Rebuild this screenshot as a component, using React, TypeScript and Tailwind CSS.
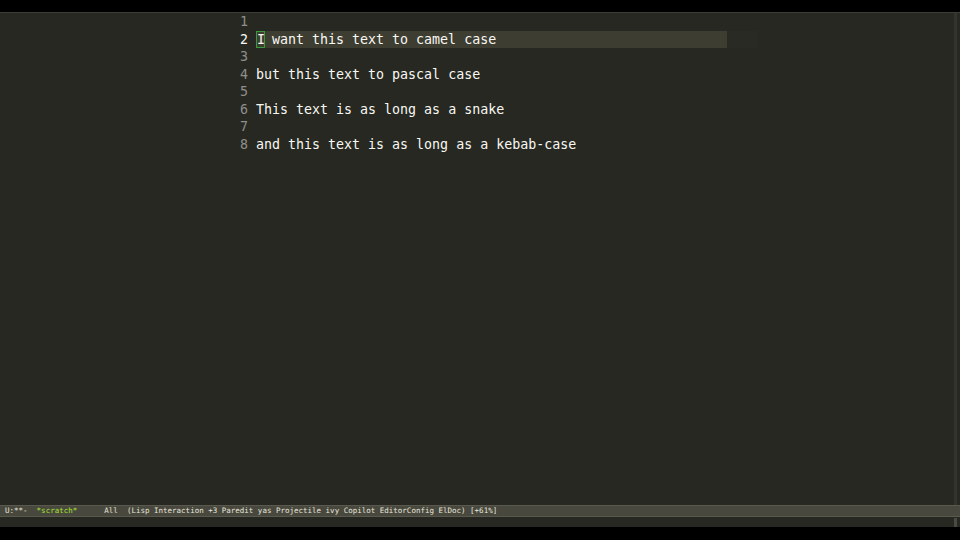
import React from 'react';

const lines = [
  '',
  'I want this text to camel case',
  '',
  'but this text to pascal case',
  '',
  'This text is as long as a snake',
  '',
  'and this text is as long as a kebab-case',
];

const mono = { fontFamily: '"DejaVu Sans Mono", "Liberation Mono", monospace' };

export default function App() {
  const current = 1;

  return (
    <div className="w-[960px] h-[540px] bg-black flex flex-col overflow-hidden" style={mono}>
      {/* title strip */}
      <div className="h-[12px] bg-black" />
      <div className="h-[1px] bg-[#3d3d38]" />

      {/* buffer */}
      <div className="flex-1 bg-[#272822] flex">
        <div className="flex-1 pl-[236px]">
          {lines.map((text, i) => {
            const active = i === current;
            return (
              <div key={i} className="flex h-[17.5px] items-center text-[13.3px] leading-[17.5px]">
                <div className={`w-[12px] text-right ${active ? 'text-[#f8f8f2]' : 'text-[#8f908a]'}`}>{i + 1}</div>
                <div className="w-[8px]" />
                <div className={`flex h-[17px] w-[471px] ${active ? 'bg-[#3e3d32]' : ''}`}>
                  {active ? (
                    <>
                      <span className="border border-[#3a9a3a] text-[#f8f8f2] w-[9px] h-[17px] leading-[15px] box-border">{text[0]}</span>
                      <span className="text-[#f8f8f2] whitespace-pre -ml-[1px]">{text.slice(1)}</span>
                    </>
                  ) : (
                    <span className="text-[#f8f8f2] whitespace-pre">{text}</span>
                  )}
                </div>
                {active && <div className="w-[31px] h-[17px] bg-[#2a2a24]" />}
              </div>
            );
          })}
        </div>
        <div className="w-[3px] bg-[#34342e] mr-[3px]" />
      </div>

      {/* mode line */}
      <div className="h-[12px] bg-[#49483e] border-y border-[#5a594e] flex items-center pl-[5px] text-[7.5px] leading-[10px] text-[#e6e6dc] whitespace-pre">
        <span>U:**-  </span>
        <span className="text-[#a6e22e]">*scratch*</span>
        <span>      All  (Lisp Interaction +3 Paredit yas Projectile ivy Copilot EditorConfig ElDoc) [+61%]</span>
      </div>

      {/* minibuffer */}
      <div className="h-[10px] bg-[#272822] flex justify-end">
        <div className="w-[3px] bg-[#4a4a42] mr-[3px] mt-[1px]" />
      </div>
      <div className="h-[13px] bg-black" />
    </div>
  );
}
